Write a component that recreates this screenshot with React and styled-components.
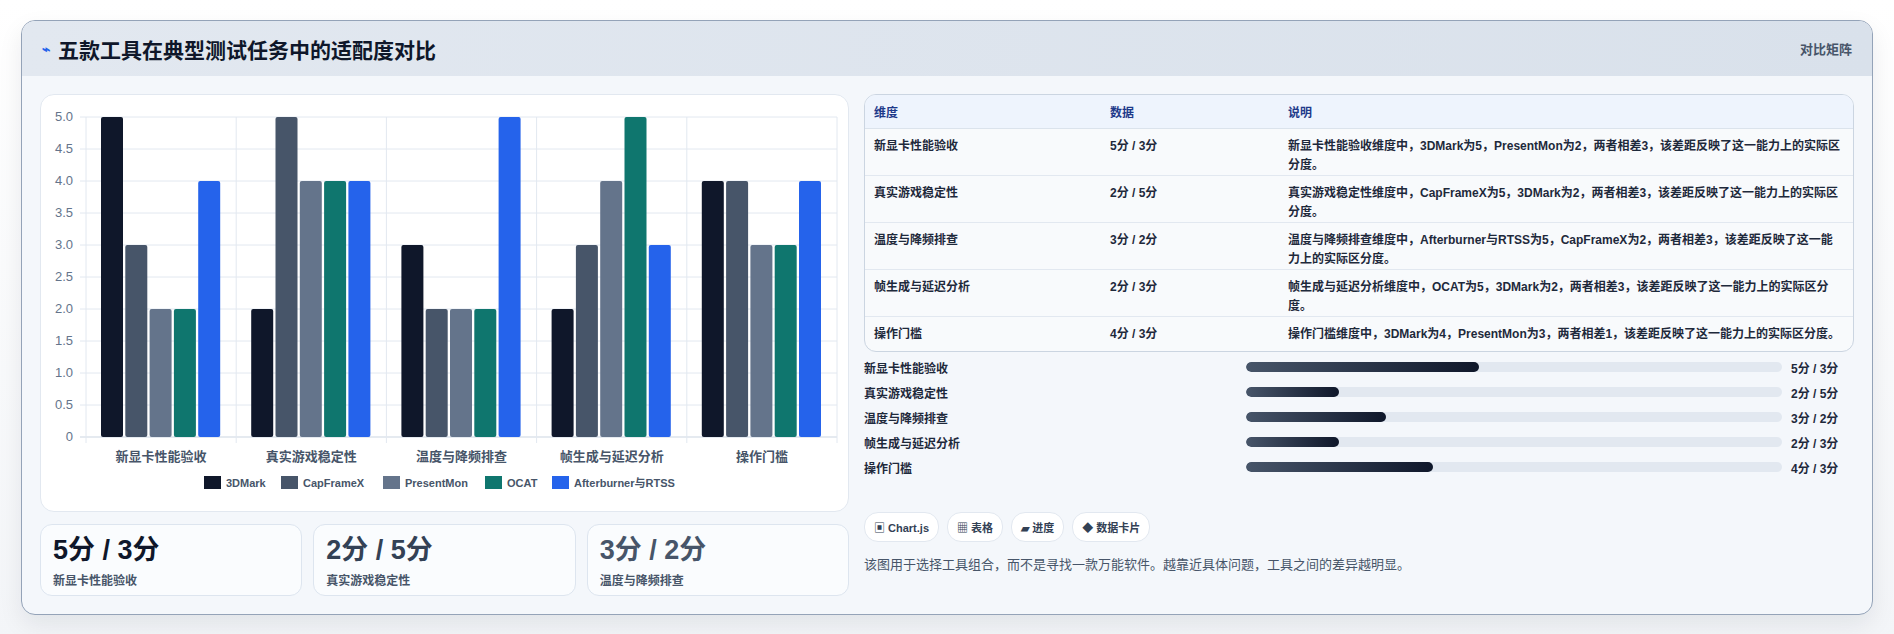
import React from 'react';
import styled, { createGlobalStyle } from 'styled-components';

const Global = createGlobalStyle`
  body { margin: 0; background: #f1f5f9; font-family: "Liberation Sans", "Noto Sans CJK SC", sans-serif; }
`;

const Page = styled.div`
  padding: 20px 21px 22px 21px;
  background: linear-gradient(180deg, #ffffff, #f3f5f8);
`;

const Card = styled.div`
  border: 1px solid #94a3b8;
  border-radius: 14px;
  background: #f4f7fb;
  box-shadow: 0 10px 24px rgba(15, 23, 42, 0.08);
  overflow: hidden;
`;

const Header = styled.div`
  height: 55px;
  display: flex;
  align-items: center;
  justify-content: space-between;
  padding: 0 20px;
  background: linear-gradient(90deg, #e2e8f0, #d9e1eb);
`;

const Title = styled.h2`
  margin: 0;
  font-size: 21px;
  font-weight: 700;
  color: #0f172a;
  display: flex;
  align-items: center;
  gap: 8px;
  span { color: #2563eb; font-size: 14px; }
`;

const Tag = styled.div`
  font-size: 13px;
  color: #475569;
  font-weight: 600;
`;

const Body = styled.div`
  display: grid;
  grid-template-columns: 809px 1fr;
  gap: 15px;
  padding: 18px;
`;

const Left = styled.div`
  display: flex;
  flex-direction: column;
  gap: 12px;
`;

const ChartPanel = styled.div`
  height: 416px;
  background: #fff;
  border: 1px solid #e2e8f0;
  border-radius: 14px;
  svg { display: block; }
`;

const Stats = styled.div`
  display: grid;
  grid-template-columns: repeat(3, 1fr);
  gap: 11px;
`;

const Stat = styled.div`
  height: 72px;
  box-sizing: border-box;
  background: #fafcfe;
  border: 1px solid #dde5ef;
  border-radius: 12px;
  padding: 8px 12px;
`;

const StatValue = styled.div`
  font-size: 27px;
  font-weight: 700;
  color: ${p => p.$c};
  line-height: 34px;
`;

const StatLabel = styled.div`
  font-size: 12px;
  font-weight: 600;
  color: #475569;
  margin-top: 4px;
`;

const Right = styled.div`
  display: flex;
  flex-direction: column;
`;

const TableWrap = styled.div`
  border: 1px solid #cbd5e1;
  border-radius: 12px;
  overflow: hidden;
  background: #f8fafc;
`;

const Table = styled.table`
  width: 100%;
  border-collapse: collapse;
  font-size: 12px;
  font-weight: 600;
  color: #1e293b;
  th {
    text-align: left;
    background: #eef4fd;
    color: #1e3a8a;
    height: 33px;
    padding: 0 9px;
    border-bottom: 1px solid #dbe3ec;
  }
  td {
    vertical-align: top;
    padding: 8px 9px 0;
    height: 44px;
    box-sizing: border-box;
    line-height: 19px;
    border-bottom: 1px solid #e2e8f0;
  }
  tr:last-child td { border-bottom: none; height: 34px; }
`;

const Bars = styled.div`
  display: flex;
  flex-direction: column;
  gap: 8px;
  margin-top: 7px;
`;

const BarRow = styled.div`
  display: grid;
  grid-template-columns: 382px 1fr 72px;
  align-items: center;
  font-size: 12px;
  font-weight: 600;
  color: #1e293b;
  height: 17px;
`;

const Track = styled.div`
  height: 10px;
  border-radius: 5px;
  background: #e2e8f0;
  overflow: hidden;
`;

const Fill = styled.div`
  height: 100%;
  border-radius: 5px;
  background: linear-gradient(90deg, #475569, #0f172a);
`;

const Value = styled.div`
  padding-left: 9px;
`;

const Chips = styled.div`
  display: flex;
  gap: 8px;
  margin-top: 36px;
`;

const Chip = styled.div`
  height: 28px;
  padding: 0 9px;
  display: flex;
  align-items: center;
  border-radius: 14px;
  background: #fff;
  border: 1px solid #e2e8f0;
  font-size: 11px;
  font-weight: 600;
  color: #334155;
`;

const Note = styled.p`
  margin: 12px 0 0;
  font-size: 13px;
  color: #475569;
`;

const tools = ['3DMark', 'CapFrameX', 'PresentMon', 'OCAT', 'Afterburner与RTSS'];
const colors = ['#0f172a', '#475569', '#64748b', '#0f766e', '#2563eb'];
const cats = ['新显卡性能验收', '真实游戏稳定性', '温度与降频排查', '帧生成与延迟分析', '操作门槛'];
const data = [
  [5, 3, 2, 2, 4],
  [2, 5, 4, 4, 4],
  [3, 2, 2, 2, 5],
  [2, 3, 4, 5, 3],
  [4, 4, 3, 3, 4],
];
const rows = [
  ['新显卡性能验收', '5分 / 3分', '新显卡性能验收维度中，3DMark为5，PresentMon为2，两者相差3，该差距反映了这一能力上的实际区分度。', 43.5],
  ['真实游戏稳定性', '2分 / 5分', '真实游戏稳定性维度中，CapFrameX为5，3DMark为2，两者相差3，该差距反映了这一能力上的实际区分度。', 17.4],
  ['温度与降频排查', '3分 / 2分', '温度与降频排查维度中，Afterburner与RTSS为5，CapFrameX为2，两者相差3，该差距反映了这一能力上的实际区分度。', 26.1],
  ['帧生成与延迟分析', '2分 / 3分', '帧生成与延迟分析维度中，OCAT为5，3DMark为2，两者相差3，该差距反映了这一能力上的实际区分度。', 17.4],
  ['操作门槛', '4分 / 3分', '操作门槛维度中，3DMark为4，PresentMon为3，两者相差1，该差距反映了这一能力上的实际区分度。', 34.8],
];

const L = 45, R = 796, T = 22, B = 342;
const gw = (R - L) / 5;
const y = v => B - (v / 5) * (B - T);

function Chart() {
  const ticks = [0, 0.5, 1, 1.5, 2, 2.5, 3, 3.5, 4, 4.5, 5];
  const legendX = [163, 240, 342, 444, 511];
  return (
    <svg width="809" height="416" viewBox="0 0 809 416" fontFamily="Liberation Sans, Noto Sans CJK SC, sans-serif">
      {ticks.map(t => (
        <g key={t}>
          <line x1={L - 6} x2={R} y1={y(t)} y2={y(t)} stroke={t === 0 ? '#cbd5e1' : '#e2e8f0'} />
          <text x={32} y={y(t) + 4} fontSize="13" fill="#64748b" textAnchor="end">{t === 0 ? '0' : t.toFixed(1)}</text>
        </g>
      ))}
      {[0, 1, 2, 3, 4, 5].map(i => (
        <line key={i} x1={L + gw * i} x2={L + gw * i} y1={T} y2={B + 6} stroke="#e2e8f0" />
      ))}
      {data.map((g, gi) => g.map((v, bi) => {
        const x = L + gw * gi + 15 + bi * 24.3;
        return <rect key={gi + '-' + bi} x={x} y={y(v)} width="22" height={B - y(v)} rx="2" fill={colors[bi]} />;
      }))}
      {cats.map((c, i) => (
        <text key={c} x={L + gw * i + gw / 2} y={366} fontSize="13" fontWeight="600" fill="#475569" textAnchor="middle">{c}</text>
      ))}
      {tools.map((t, i) => (
        <g key={t}>
          <rect x={legendX[i]} y={381} width="17" height="13" fill={colors[i]} />
          <text x={legendX[i] + 22} y={392} fontSize="11" fontWeight="600" fill="#475569">{t}</text>
        </g>
      ))}
    </svg>
  );
}

export default function App() {
  return (
    <>
      <Global />
      <Page>
        <Card>
          <Header>
            <Title><span>⌁</span>五款工具在典型测试任务中的适配度对比</Title>
            <Tag>对比矩阵</Tag>
          </Header>
          <Body>
            <Left>
              <ChartPanel><Chart /></ChartPanel>
              <Stats>
                <Stat><StatValue $c="#0f172a">5分 / 3分</StatValue><StatLabel>新显卡性能验收</StatLabel></Stat>
                <Stat><StatValue $c="#334155">2分 / 5分</StatValue><StatLabel>真实游戏稳定性</StatLabel></Stat>
                <Stat><StatValue $c="#475569">3分 / 2分</StatValue><StatLabel>温度与降频排查</StatLabel></Stat>
              </Stats>
            </Left>
            <Right>
              <TableWrap>
                <Table>
                  <colgroup><col style={{ width: 236 }} /><col style={{ width: 178 }} /><col /></colgroup>
                  <thead><tr><th>维度</th><th>数据</th><th>说明</th></tr></thead>
                  <tbody>
                    {rows.map(r => (
                      <tr key={r[0]}><td>{r[0]}</td><td>{r[1]}</td><td>{r[2]}</td></tr>
                    ))}
                  </tbody>
                </Table>
              </TableWrap>
              <Bars>
                {rows.map(r => (
                  <BarRow key={r[0]}>
                    <div>{r[0]}</div>
                    <Track><Fill style={{ width: r[3] + '%' }} /></Track>
                    <Value>{r[1]}</Value>
                  </BarRow>
                ))}
              </Bars>
              <Chips>
                <Chip>▣ Chart.js</Chip>
                <Chip>▦ 表格</Chip>
                <Chip>▰ 进度</Chip>
                <Chip>◆ 数据卡片</Chip>
              </Chips>
              <Note>该图用于选择工具组合，而不是寻找一款万能软件。越靠近具体问题，工具之间的差异越明显。</Note>
            </Right>
          </Body>
        </Card>
      </Page>
    </>
  );
}
